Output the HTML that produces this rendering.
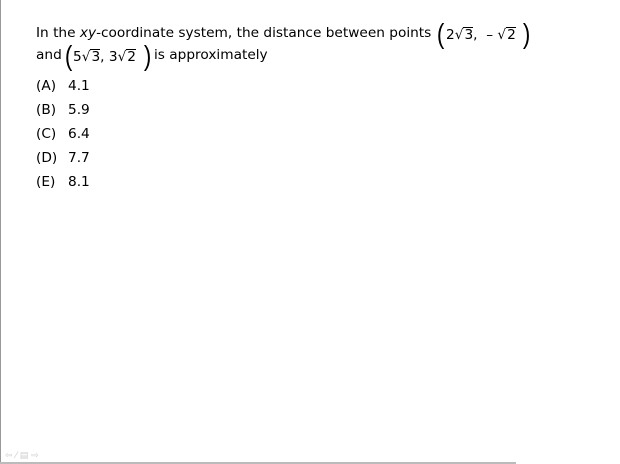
<!DOCTYPE html>
<html><head><style>
html,body{margin:0;padding:0;background:#fff;}
body{width:620px;height:464px;position:relative;overflow:hidden;font-family:"DejaVu Sans","Liberation Sans",sans-serif;font-size:13.7px;color:#000;}
.t{position:absolute;white-space:nowrap;line-height:1;}
.p{position:absolute;font-family:"Liberation Sans",sans-serif;font-size:28px;line-height:1;transform:scaleX(0.8);}
.r{display:inline-block;border-top:1px solid #000;padding-left:1px;line-height:1.1;}
#lb{position:absolute;left:0;top:0;width:1px;height:464px;background:#999;}
#bb{position:absolute;left:0;top:462px;width:516px;height:2px;background:#bbb;}
</style></head><body>
<div id="lb"></div><div id="bb"></div>
<div class="t" style="left:36px;top:27px;">In the <i>xy</i>-coordinate system, the distance between points</div>
<div class="p" style="left:436px;top:20px;">(</div>
<div class="t" style="left:446px;top:27px;">2√<span class="r">3</span>,&nbsp;&nbsp;– √<span class="r">2</span></div>
<div class="p" style="left:522px;top:20px;">)</div>
<div class="t" style="left:36px;top:49px;">and</div>
<div class="p" style="left:64px;top:42px;">(</div>
<div class="t" style="left:73px;top:49px;">5√<span class="r">3</span>,&nbsp;3√<span class="r">2</span></div>
<div class="p" style="left:143px;top:42px;">)</div>
<div class="t" style="left:154px;top:49px;">is approximately</div>
<div class="t" style="left:36px;top:80px;">(A)</div><div class="t" style="left:68px;top:80px;">4.1</div>
<div class="t" style="left:36px;top:104px;">(B)</div><div class="t" style="left:68px;top:104px;">5.9</div>
<div class="t" style="left:36px;top:128px;">(C)</div><div class="t" style="left:68px;top:128px;">6.4</div>
<div class="t" style="left:36px;top:152px;">(D)</div><div class="t" style="left:68px;top:152px;">7.7</div>
<div class="t" style="left:36px;top:176px;">(E)</div><div class="t" style="left:68px;top:176px;">8.1</div>
<div class="t" style="left:5px;top:452px;font-size:9px;color:#ccc;">⇦ ⁄ ▤ ⇨</div>
</body></html>
